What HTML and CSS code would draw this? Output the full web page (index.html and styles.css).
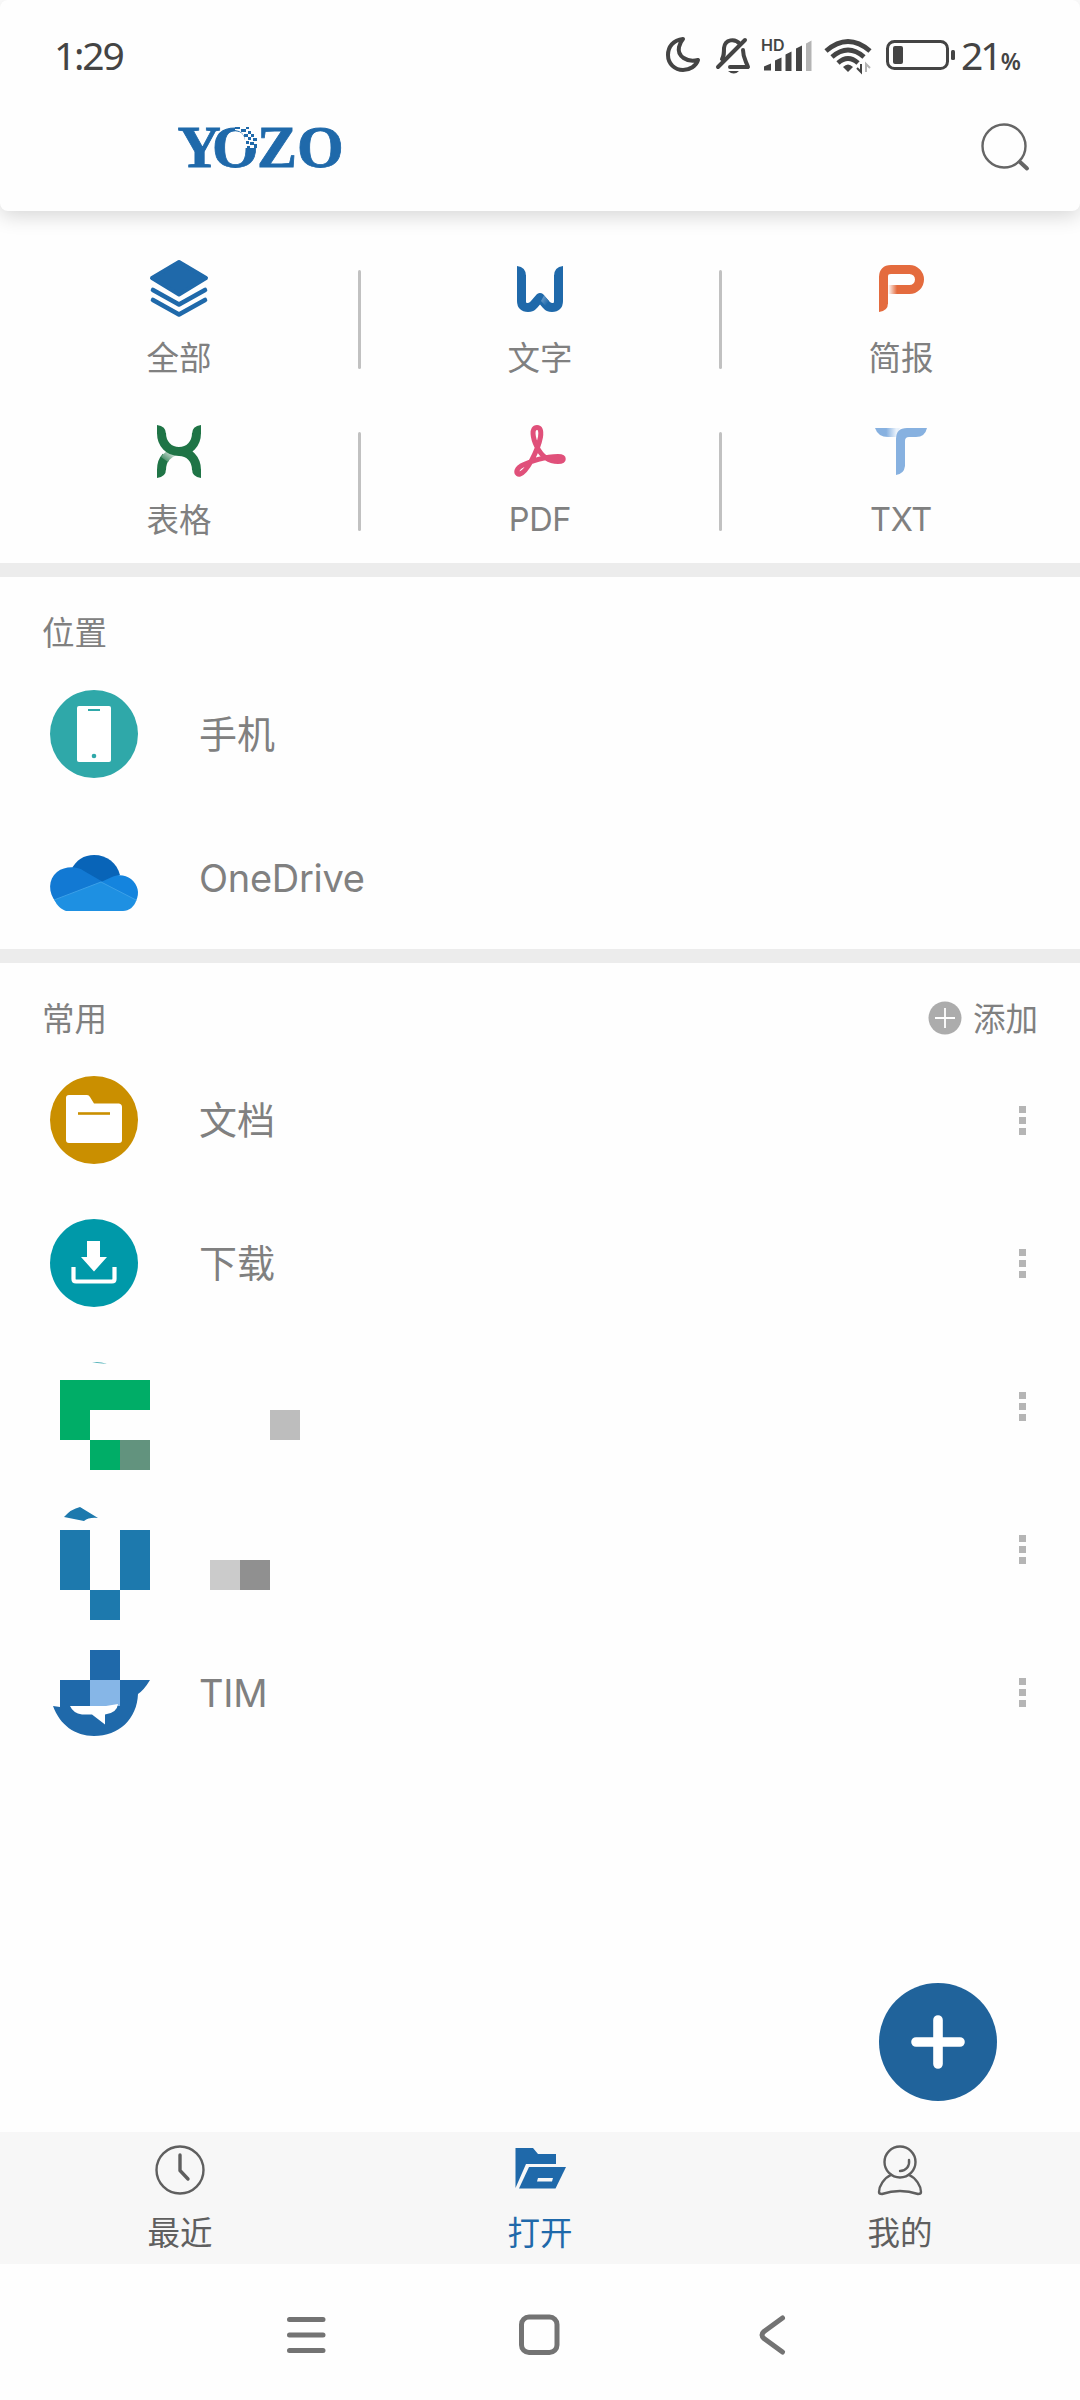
FILE: index.html
```html
<!DOCTYPE html>
<html lang="zh-CN">
<head>
<meta charset="utf-8">
<title>YOZO</title>
<link rel="stylesheet" href="styles.css">
</head>
<body>
<div class="screen">
  <header class="top">
    <div class="status">
      <span class="time">1:29</span>
      <svg class="status-icons" width="300" height="50" viewBox="660 30 300 50">
        <g fill="none" stroke="#444" stroke-width="4" stroke-linejoin="round" stroke-linecap="round">
          <path d="M683 39C673 40 668 47 668 55C668 64 675 70 683 70C690 70 696 66 698 60C687 63 677 56 679 47C680 43 681 41 683 39Z"/>
          <path d="M740 44C735 38 725 39 724 48C724 54 724 56 722 59"/>
          <path d="M743 50C743 58 746 61 748 67H730"/>
          <path d="M718 67L745 40"/>
        </g>
        <path d="M728 71h11q-5 5-11 0z" fill="#444"/>
        <text class="hd" x="761" y="51">HD</text>
        <path fill="#444" d="M764 67q0-1 1-1l6-2.500v7h-7zM775 61q0-1 1-1l5.500-2.500v13.500h-6.500zM785.500 55q0-1 1-1l5-2.500v19.500h-6zM796 49q0-1 1-1l5-2.500v25.500h-6z"/>
        <path fill="#b4b4b4" d="M806 44q0-1 1-1l4.500-2.500v30.500h-5.500z"/>
        <g fill="none" stroke="#444" stroke-width="4.800">
          <path d="M826 51Q848 32 870 51"/>
          <path d="M832 57Q848 43 864 57"/>
          <path d="M838 63Q848 54 858 63"/>
        </g>
        <path d="M843 67Q848 62 853 67L848 72Z" fill="#444"/>
        <path d="M861 64v8l-4-4" fill="none" stroke="#444" stroke-width="2"/>
        <path d="M866 72v-8l4 4" fill="none" stroke="#b4b4b4" stroke-width="2"/>
        <rect x="887.500" y="41.500" width="60" height="27" rx="7" fill="none" stroke="#444" stroke-width="3"/>
        <rect x="893" y="46" width="10" height="18" rx="2" fill="#444"/>
        <rect x="951" y="50" width="4" height="10" rx="1.500" fill="#444"/>
      </svg>
      <span class="battery">21<small>%</small></span>
    </div>
    <div class="brand">
      <svg width="190" height="80" viewBox="170 108 190 80">
        <text class="logo" y="167" x="177.500 212 257 297">YOZO</text>
        <path d="M235 126h24v22h-14v-8q-1-9-10-10z" fill="#fefefe"/>
        <path fill="#1f69aa" d="M235 127h5v2h-5zM241 129h5v3h-5zM246 127h3v2h-3zM248 131h3v3h-3zM244 134h4v3h-4zM251 134h3v3h-3zM248 137h3v3h-3zM253 138h4v3h-4zM246 141h3v3h-3zM250 142h4v3h-4zM247 146h3v2h-3zM254 144h3v4h-3z"/>
      </svg>
      <svg class="search" width="56" height="56" viewBox="976 120 56 56" fill="none" stroke="#666" stroke-linecap="round">
        <circle cx="1004" cy="146" r="21.500" stroke-width="2.400"/>
        <path d="M1020 162l7 6.500" stroke-width="4"/>
      </svg>
    </div>
  </header>

  <section class="types">
    <div class="type">
      <svg width="72" height="72" viewBox="143 252 72 72" fill="#1f69aa" stroke="#1f69aa" stroke-linejoin="round" stroke-linecap="round">
        <path d="M179 262L206 278L179 294.500L152 278Z" stroke-width="4"/>
        <path d="M153 290L179 304.500L205 290M153 300L179 314.500L205 300" fill="none" stroke-width="4.600"/>
      </svg>
      <span>全部</span>
    </div>
    <i class="rule"></i>
    <div class="type">
      <svg width="72" height="72" viewBox="504 252 72 72">
        <defs><linearGradient id="wf" x1="0" y1="0" x2="1" y2="1"><stop offset=".1" stop-color="#6fa0cd"/><stop offset=".8" stop-color="#1f69aa"/></linearGradient></defs>
        <path d="M521.500 275V301Q521.500 307.500 528 307.500Q531.500 307.500 534 304.500L540 297.500L546 304.500Q548.500 307.500 552 307.500Q558.500 307.500 558.500 301V275" fill="none" stroke="#1f69aa" stroke-width="9" stroke-linejoin="round"/>
        <path d="M517 276V266Q526 267 526 276ZM563 276V266Q554 267 554 276Z" fill="#1f69aa"/>
        <path d="M541 301L544 295.500L549 301L545.500 306Z" fill="url(#wf)"/>
      </svg>
      <span>文字</span>
    </div>
    <i class="rule"></i>
    <div class="type">
      <svg width="72" height="72" viewBox="865 252 72 72">
        <defs><linearGradient id="pf"><stop offset="0" stop-color="#fff"/><stop offset="1" stop-color="#e46b3e"/></linearGradient></defs>
        <path d="M883.500 304V277Q883.500 269.500 891 269.500H909.500a10 10 0 0 1 0 20H896" fill="none" stroke="#e46b3e" stroke-width="9"/>
        <path d="M888 285h9v9h-9z" fill="url(#pf)"/>
        <path d="M879 303V312Q888 311 888 303Z" fill="#e46b3e"/>
      </svg>
      <span>简报</span>
    </div>

    <div class="type">
      <svg width="72" height="72" viewBox="143 414 72 72">
        <defs><linearGradient id="xf" x1="1" y1="0" x2="0" y2="1"><stop offset="0" stop-color="#fff"/><stop offset="1" stop-color="#1f7446"/></linearGradient></defs>
        <path d="M161.500 470C161.500 464 163 460 166 457" fill="none" stroke="#1f7446" stroke-width="9"/>
        <path d="M161 457Q164 453 167 451L176 455.500Q170 458 168 462Z" fill="url(#xf)"/>
        <path d="M161.500 433C161.500 444 169 451.500 179 451.500S196.500 444 196.500 433M179 451.500C189 451.500 196.500 459 196.500 470" fill="none" stroke="#1f7446" stroke-width="9"/>
        <path d="M157 434V425Q166 426 166 434ZM201 434V425Q192 426 192 434ZM157 469V478Q166 477 166 469ZM201 469V478Q192 477 192 469Z" fill="#1f7446"/>
      </svg>
      <span>表格</span>
    </div>
    <i class="rule"></i>
    <div class="type">
      <svg width="72" height="72" viewBox="504 414 72 72" fill="none" stroke="#e0507a" stroke-width="5" stroke-linejoin="round">
        <path d="M537 427.500C531 427.500 532.500 438 537 447C542 457 550 461.500 558 461.500C565 461.500 565 456.500 558 456.500C546 456.500 530 461 521 466C515 470 516 475 520 474C527 472 538 450 540.500 437C541.500 430 540 427.500 537 427.500Z"/>
      </svg>
      <span class="latin">PDF</span>
    </div>
    <i class="rule"></i>
    <div class="type">
      <svg width="72" height="72" viewBox="865 414 72 72">
        <defs><linearGradient id="tf"><stop offset=".45" stop-color="#87b1e0"/><stop offset=".85" stop-color="#eaf2fb"/></linearGradient></defs>
        <path d="M875 428H900L896 437H888Q878 437 875 428Z" fill="url(#tf)"/>
        <path d="M896 475V439Q896 428 907 428H927Q925 437 916 437H909Q905 437 905 441V466Q904 474 896 475Z" fill="#87b1e0"/>
      </svg>
      <span class="latin">TXT</span>
    </div>
  </section>

  <section class="group">
    <div class="group-head"><h2>位置</h2></div>
    <div class="row">
      <svg class="art" width="199" height="143" viewBox="0 663 199 143">
        <circle cx="94" cy="734" r="44" fill="#2fa8a9"/>
        <rect x="77" y="706" width="34" height="56" rx="2" fill="#fff"/>
        <path d="M88 710h12" stroke="#2fa8a9" stroke-width="2"/>
        <circle cx="94" cy="756" r="2.300" fill="#2fa8a9"/>
      </svg>
      <span class="name">手机</span>
    </div>
    <div class="row">
      <svg class="art" width="199" height="143" viewBox="0 806 199 143">
        <path d="M71 870C76 860 84 855 94 855C107 855 117 863 120 875L103 884Z" fill="#0864b8"/>
        <path d="M56 902C48 893 48 879 57 872C65 866 77 866 84 871L103 882L80 895Z" fill="#1279d3"/>
        <path d="M101 882L112 877C118 874 126 875 131 879C138 885 140 893 136 901L115 895Z" fill="#1484de"/>
        <path d="M54.500 900L101 882L136.500 900C134 907 129 911 123 911H66C61 909 57 906 54.500 900Z" fill="#1e90e2"/>
        <path d="M54 900L101 882L136 900" fill="none" stroke="#3ba0e8"/>
      </svg>
      <span class="name latin">OneDrive</span>
    </div>
  </section>

  <section class="group">
    <div class="group-head">
      <h2>常用</h2>
      <div class="add">
        <svg width="34" height="34" viewBox="0 0 34 34"><circle cx="17" cy="17" r="16.500" fill="#acacac"/><path d="M7 17h20M17 7v20" stroke="#fff" stroke-width="1.800"/></svg>
        <span>添加</span>
      </div>
    </div>
    <div class="row">
      <svg class="art" width="199" height="143" viewBox="0 1049 199 143">
        <circle cx="94" cy="1120" r="44" fill="#ca8f00"/>
        <path d="M69 1095H87Q89 1095 90 1097L94 1103.500H119Q122 1104 122 1107V1140Q122 1143 119 1143H69Q66 1143 66 1140V1098Q66 1095 69 1095Z" fill="#fff"/>
        <path d="M78 1113.500h32" stroke="#ca8f00" stroke-width="2.600"/>
      </svg>
      <span class="name">文档</span>
      <i class="more"></i>
    </div>
    <div class="row">
      <svg class="art" width="199" height="143" viewBox="0 1192 199 143">
        <circle cx="94" cy="1263" r="44" fill="#0099a9"/>
        <path d="M87 1241H100V1257H107L94 1271.500L81 1257H87Z" fill="#fff"/>
        <path d="M73.500 1267V1279Q73.500 1281.500 76 1281.500H112Q114.500 1281.500 114.500 1279V1267" fill="none" stroke="#fff" stroke-width="4.200"/>
      </svg>
      <span class="name">下载</span>
      <i class="more"></i>
    </div>
    <div class="row">
      <svg class="art" width="320" height="143" viewBox="0 1335 320 143" shape-rendering="crispEdges">
        <path d="M60 1380H150V1410H90V1440H60ZM90 1440h30v30H90z" fill="#00ad67"/>
        <path d="M120 1440h30v30h-30z" fill="#62937e"/>
        <path d="M270 1410h30v30h-30z" fill="#bdbdbd"/>
        <path d="M92 1362.500Q99 1361 107 1364Q100 1363 92 1362.500Z" fill="#55b3ba" shape-rendering="auto"/>
      </svg>
      <i class="more"></i>
    </div>
    <div class="row">
      <svg class="art" width="320" height="143" viewBox="0 1478 320 143">
        <path d="M64 1517Q71 1509 80 1507L98 1518Q89 1517 84 1521Z" fill="#1d79ad"/>
        <path d="M60 1530h30v60H60zM120 1530h30v60h-30zM90 1590h30v30H90z" fill="#1d79ad"/>
        <path d="M210 1560h30v30h-30z" fill="#cbcbcb"/>
        <path d="M240 1560h30v30h-30z" fill="#909090"/>
      </svg>
      <i class="more"></i>
    </div>
    <div class="row">
      <svg class="art" width="199" height="143" viewBox="0 1621 199 143">
        <path d="M90 1650h30v30h30Q144 1690 138 1694C137 1719 119 1736 94 1736C75 1736 60 1725 53 1706L60 1707V1680H90Z" fill="#1f69aa"/>
        <path d="M90 1680h30v26H90z" fill="#86b6e7"/>
        <path d="M70 1706H106L118 1704Q117 1713 105 1714.500V1724.500L92 1714.500H82Q73 1713 70 1706Z" fill="#fff"/>
      </svg>
      <span class="name latin">TIM</span>
      <i class="more"></i>
    </div>
  </section>

  <button class="fab" aria-label="新建">
    <svg width="118" height="118" viewBox="0 0 118 118"><path d="M59 37v44M37 59h44" stroke="#fff" stroke-width="9.600" stroke-linecap="round"/></svg>
  </button>

  <nav class="tabs">
    <div class="tab">
      <svg width="60" height="60" viewBox="150 2140 60 60" fill="none" stroke="#5f5f5f" stroke-linecap="round" stroke-linejoin="round">
        <circle cx="180" cy="2170" r="23.500" stroke-width="2.400"/><path d="M180 2155V2170.500L188 2179" stroke-width="3.400"/>
      </svg>
      <span>最近</span>
    </div>
    <div class="tab active">
      <svg width="60" height="60" viewBox="510 2140 60 60" fill="#1f69aa">
        <path d="M515.500 2148H533L538 2154H556V2164H526L515.500 2188Z"/>
        <path d="M529 2167H566L555.500 2188.500H519Z"/><path d="M538 2178h15l-1 3.500h-15z" fill="#f7f7f7"/>
      </svg>
      <span>打开</span>
    </div>
    <div class="tab">
      <svg width="60" height="60" viewBox="870 2140 60 60" fill="none" stroke="#5f5f5f" stroke-width="2.400" stroke-linecap="round" stroke-linejoin="round">
        <circle cx="900" cy="2162" r="15.500"/>
        <path d="M909 2160C910 2166 906 2171 900 2171"/>
        <path d="M891 2175C884 2178 879 2186 879 2192Q879 2194 882 2194Q900 2188 918 2194Q921 2194 921 2192C921 2186 916 2178 909 2175"/>
      </svg>
      <span>我的</span>
    </div>
  </nav>

  <div class="system">
    <svg width="1080" height="136" viewBox="0 2264 1080 136" fill="none" stroke="#737373" stroke-width="5" stroke-linecap="round" stroke-linejoin="round">
      <path d="M289.500 2319.500H323M289.500 2335H323M289.500 2350.500H323"/>
      <rect x="521.500" y="2317" width="35.500" height="35.500" rx="7.500"/>
      <path d="M782.500 2318L764 2331.500Q760 2335 764 2338.500L782.500 2352"/>
    </svg>
  </div>
</div>
</body>
</html>
```
FILE: styles.css
```css
* { box-sizing: border-box; }

body {
  margin: 0;
  background: #fefefe;
  font-family: "Noto Sans CJK SC", sans-serif;
  font-weight: 400;
  color: #808080;
}

svg { display: block; flex: none; }

.latin { font-family: Inter, sans-serif; font-weight: 400; letter-spacing: -.3px; }

.screen {
  width: 1080px;
  height: 2400px;
  display: flex;
  flex-direction: column;
  position: relative;
  overflow: hidden;
}

.top {
  height: 211px;
  background: #fefefe;
  border-radius: 8px;
  box-shadow: 0 5px 20px rgba(0, 0, 0, .16);
}

.status {
  height: 108px;
  padding: 30px 58px 0 54px;
  display: flex;
  align-items: flex-start;
  color: #444;
  font-family: "Noto Sans", sans-serif;
  font-weight: 400;
  font-size: 39px;
  line-height: 49px;
}

.status-icons { margin-right: 1px; }
.time { width: 606px; flex: none; letter-spacing: -2.2px; }
.battery { width: 62px; letter-spacing: -3px; white-space: nowrap; }
.battery small { font-size: 23px; font-weight: 600; margin-left: 1px; letter-spacing: 0; }
.hd { font: 600 16px Inter, sans-serif; fill: #444; }

.brand {
  padding: 0 48px 0 170px;
  display: flex;
  justify-content: space-between;
}

.search { margin-top: 12px; }

.logo {
  font: 700 60px "Liberation Serif", serif;
  fill: #1f69aa;
  stroke: #1f69aa;
  stroke-width: .8px;
}

.types {
  display: grid;
  grid-template-columns: 358px 3px 358px 3px 358px;
  grid-auto-rows: 162px;
  padding-top: 28px;
}

.type {
  display: flex;
  flex-direction: column;
  align-items: center;
  padding-top: 13px;
  font-size: 32.5px;
  line-height: 64px;
}

.type .latin { line-height: 68px; }

.rule { height: 99px; margin-top: 31px; background: #c1c1c1; border-radius: 2px; }

.group { border-top: 14px solid #ececec; }

.group-head {
  height: 86px;
  padding: 22px 42px 0;
  display: flex;
  justify-content: space-between;
  font-size: 32.5px;
  line-height: 64px;
}

h2 { margin: 0; font: inherit; }

.add { display: flex; gap: 11px; }
.add svg { margin-top: 16px; }

.row { height: 143px; display: flex; align-items: center; }

.name { font-size: 38px; line-height: 60px; margin-top: -6px; }
.name.latin { margin-top: 0; }

.more {
  width: 7px;
  height: 29px;
  margin: 0 54px 0 auto;
  background: repeating-linear-gradient(#b5b5b5 0 7px, transparent 7px 11px);
}

.fab {
  position: absolute;
  left: 879px;
  top: 1983px;
  width: 118px;
  height: 118px;
  padding: 0;
  border: 0;
  border-radius: 50%;
  background: #20639b;
}

.tabs {
  height: 132px;
  margin-top: auto;
  padding-top: 8px;
  display: grid;
  grid-template-columns: repeat(3, 1fr);
  background: #f7f7f7;
  font-size: 32.5px;
  line-height: 62px;
  color: #5f5f5f;
}

.tab { display: flex; flex-direction: column; align-items: center; }
.active { color: #1f69aa; }
.system { height: 136px; }
```
